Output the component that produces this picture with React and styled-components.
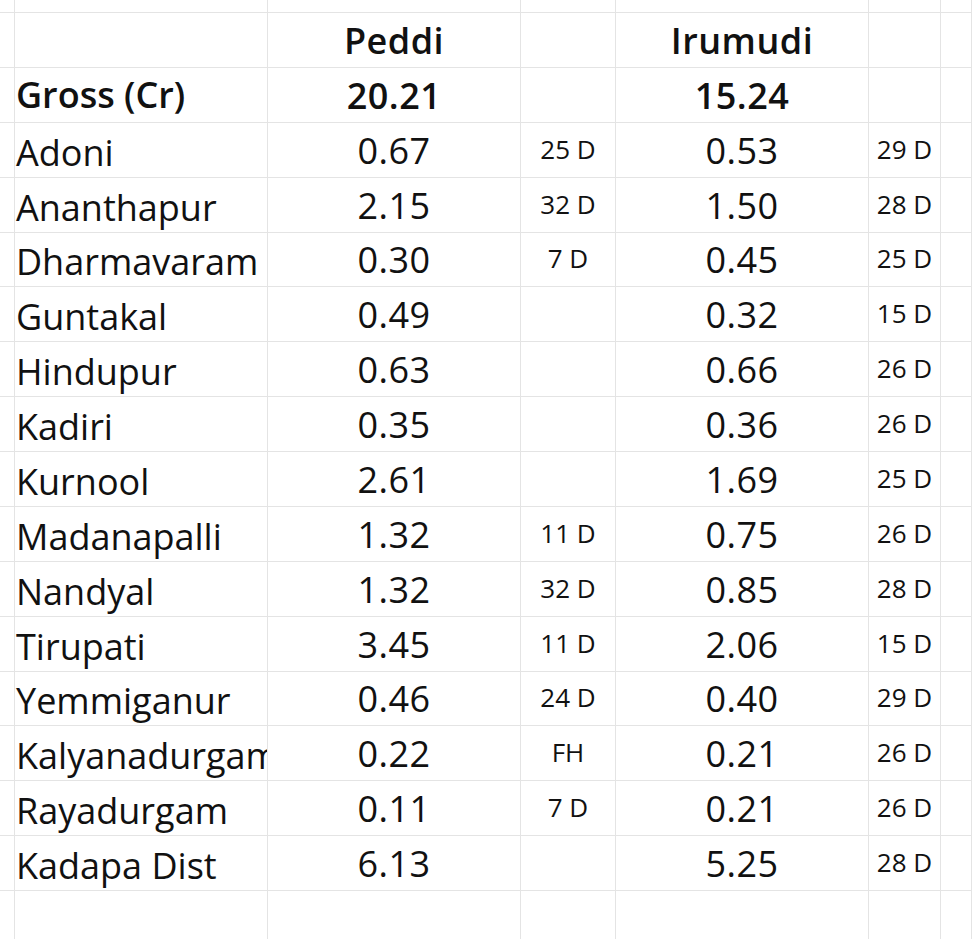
import React from "react";
import styled, { createGlobalStyle } from "styled-components";

const Global = createGlobalStyle`
  html, body { margin: 0; padding: 0; background: #fff; }
  body { font-family: "Open Sans", "DejaVu Sans", sans-serif; color: #111; }
`;

const ROW_H = 54.875;

const Sheet = styled.div`
  display: grid;
  grid-template-columns: 15px 253px 253px 95px 253px 72px 1fr;
  grid-template-rows: 13px repeat(16, ${ROW_H}px) 60px;
  width: 972px;
  height: 939px;
  overflow: hidden;
`;

const Cell = styled.div`
  box-sizing: border-box;
  border-right: 1px solid #e4e4e4;
  border-bottom: 1px solid #e4e4e4;
  overflow: hidden;
  white-space: nowrap;
  display: flex;
  align-items: flex-end;
  justify-content: ${(p) => (p.$align === "left" ? "flex-start" : "center")};
  padding: 0 0 ${(p) => p.$pb ?? 0}px ${(p) => (p.$align === "left" ? 1 : 0)}px;
  font-size: ${(p) => p.$size ?? 36}px;
  font-weight: ${(p) => (p.$bold ? 600 : 400)};
  line-height: normal;
  letter-spacing: ${(p) => p.$ls ?? 0}px;
`;

const rows = [
  ["Adoni", "0.67", "25 D", "0.53", "29 D"],
  ["Ananthapur", "2.15", "32 D", "1.50", "28 D"],
  ["Dharmavaram", "0.30", "7 D", "0.45", "25 D"],
  ["Guntakal", "0.49", "", "0.32", "15 D"],
  ["Hindupur", "0.63", "", "0.66", "26 D"],
  ["Kadiri", "0.35", "", "0.36", "26 D"],
  ["Kurnool", "2.61", "", "1.69", "25 D"],
  ["Madanapalli", "1.32", "11 D", "0.75", "26 D"],
  ["Nandyal", "1.32", "32 D", "0.85", "28 D"],
  ["Tirupati", "3.45", "11 D", "2.06", "15 D"],
  ["Yemmiganur", "0.46", "24 D", "0.40", "29 D"],
  ["Kalyanadurgam", "0.22", "FH", "0.21", "26 D"],
  ["Rayadurgam", "0.11", "7 D", "0.21", "26 D"],
  ["Kadapa Dist", "6.13", "", "5.25", "28 D"],
];

const Blank = () => <Cell />;

function Row({ cells, header }) {
  const [name, p, pd, i, id] = cells;
  return (
    <>
      <Blank />
      <Cell $align="left" $bold={header} $pb={header ? 3 : 0}>{name}</Cell>
      <Cell $bold={header} $pb={header ? 2 : 2} $ls={0.5}>{p}</Cell>
      <Cell $size={26} $pb={10}>{pd}</Cell>
      <Cell $bold={header} $pb={header ? 2 : 2} $ls={0.5}>{i}</Cell>
      <Cell $size={26} $pb={10}>{id}</Cell>
      <Blank />
    </>
  );
}

export default function App() {
  return (
    <>
      <Global />
      <Sheet>
        {Array.from({ length: 7 }).map((_, k) => (
          <Blank key={"t" + k} />
        ))}
        <Row header cells={["", "Peddi", "", "Irumudi", ""]} />
        <Row header cells={["Gross (Cr)", "20.21", "", "15.24", ""]} />
        {rows.map((r) => (
          <Row key={r[0]} cells={r} />
        ))}
        {Array.from({ length: 7 }).map((_, k) => (
          <Blank key={"b" + k} />
        ))}
      </Sheet>
    </>
  );
}
